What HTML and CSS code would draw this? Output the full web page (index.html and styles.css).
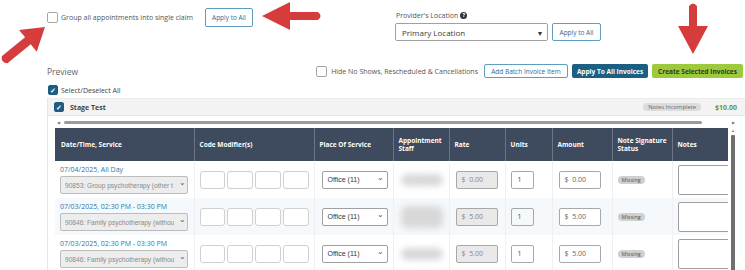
FILE: index.html
```html
<!DOCTYPE html>
<html lang="en">
<head>
    <meta charset="UTF-8">
    <meta name="viewport" content="width=device-width, initial-scale=1.0">
    <title>Batch Invoices</title>
    <link rel="stylesheet" href="styles.css">
</head>
<body>
<div class="page">
    <!-- Claim / location options -->
    <div class="top-row">
        <div class="claim-group">
            <label class="check-label"><span class="box"></span>Group all appointments into single claim</label>
        </div>
        <button class="btn-outline btn-tall">Apply to All</button>
        <div class="location">
            <div class="location-label">Provider's Location <span class="help">?</span></div>
            <div class="location-controls">
                <div class="select select-location"><span class="select-text">Primary Location</span><span class="caret">&#9662;</span></div>
                <button class="btn-outline btn-loc">Apply to All</button>
            </div>
        </div>
    </div>

    <!-- Preview toolbar -->
    <div class="preview-head">
        <span class="preview-title">Preview</span>
        <label class="check-label hide-label"><span class="box"></span>Hide No Shows, Rescheduled &amp; Cancellations</label>
        <button class="btn-outline btn-small">Add Batch Invoice Item</button>
        <button class="btn-dark">Apply To All Invoices</button>
        <button class="btn-green">Create Selected Invoices</button>
    </div>

    <label class="check-label select-all"><span class="box checked">&#10003;</span>Select/Deselect All</label>

    <div class="group">
        <div class="group-bar">
            <span class="box checked">&#10003;</span>
            <span class="group-name">Stage Test</span>
            <span class="badge-notes">Notes Incomplete</span>
            <span class="group-total">$10.00</span>
        </div>

        <div class="hscroll">
            <span class="arrow-l">&#9664;</span>
            <div class="hscroll-thumb"></div>
            <span class="arrow-r">&#9654;</span>
        </div>

        <div class="table-wrap">
            <div class="table-clip">
                <table class="invoice-table">
                    <colgroup>
                        <col style="width:139px"><col style="width:120px"><col style="width:79px">
                        <col style="width:56px"><col style="width:56px"><col style="width:47px">
                        <col style="width:60px"><col style="width:60px"><col style="width:80px">
                    </colgroup>
                    <thead>
                        <tr>
                            <th>Date/Time, Service</th>
                            <th>Code Modifier(s)</th>
                            <th>Place Of Service</th>
                            <th>Appointment Staff</th>
                            <th>Rate</th>
                            <th>Units</th>
                            <th>Amount</th>
                            <th>Note Signature Status</th>
                            <th>Notes</th>
                        </tr>
                    </thead>
                    <tbody>
                        <tr>
                            <td class="cell-date">
                                <div class="date-link">07/04/2025, All Day</div>
                                <div class="select select-service"><span class="select-text">90853: Group psychotherapy (other t</span><span class="chev">&#8964;</span></div>
                            </td>
                            <td><div class="mods"><span></span><span></span><span></span><span></span></div></td>
                            <td><div class="select select-place"><span class="select-text">Office (11)</span><span class="chev">&#8964;</span></div></td>
                            <td><div class="staff-blur"></div></td>
                            <td><div class="money readonly">$&nbsp; 0.00</div></td>
                            <td><div class="units">1</div></td>
                            <td><div class="money">$&nbsp; 0.00</div></td>
                            <td><span class="badge-missing">Missing</span></td>
                            <td><div class="notes-box"></div></td>
                        </tr>
                        <tr class="alt">
                            <td class="cell-date">
                                <div class="date-link">07/03/2025, 02:30 PM - 03:30 PM</div>
                                <div class="select select-service"><span class="select-text">90846: Family psychotherapy (withou</span><span class="chev">&#8964;</span></div>
                            </td>
                            <td><div class="mods"><span></span><span></span><span></span><span></span></div></td>
                            <td><div class="select select-place"><span class="select-text">Office (11)</span><span class="chev">&#8964;</span></div></td>
                            <td><div class="staff-blur tall"></div></td>
                            <td><div class="money readonly">$&nbsp; 5.00</div></td>
                            <td><div class="units">1</div></td>
                            <td><div class="money">$&nbsp; 5.00</div></td>
                            <td><span class="badge-missing">Missing</span></td>
                            <td><div class="notes-box"></div></td>
                        </tr>
                        <tr>
                            <td class="cell-date">
                                <div class="date-link">07/03/2025, 02:30 PM - 03:30 PM</div>
                                <div class="select select-service"><span class="select-text">90846: Family psychotherapy (withou</span><span class="chev">&#8964;</span></div>
                            </td>
                            <td><div class="mods"><span></span><span></span><span></span><span></span></div></td>
                            <td><div class="select select-place"><span class="select-text">Office (11)</span><span class="chev">&#8964;</span></div></td>
                            <td><div class="staff-blur"></div></td>
                            <td><div class="money readonly">$&nbsp; 5.00</div></td>
                            <td><div class="units">1</div></td>
                            <td><div class="money">$&nbsp; 5.00</div></td>
                            <td><span class="badge-missing">Missing</span></td>
                            <td><div class="notes-box"></div></td>
                        </tr>
                    </tbody>
                </table>
            </div>
            <div class="vscroll">
                <span class="arrow-u">&#9650;</span>
                <div class="vscroll-thumb"></div>
            </div>
        </div>
    </div>

    <!-- Red annotation arrows -->
    <svg class="annotations" width="745" height="270" viewBox="0 0 745 270">
        <g fill="#d63c3c">
            <path d="M262 16 L290 2 L290 12 L318 12 Q323 16 318 20 L290 20 L290 30 Z"/>
            <path d="M693 54 L678 26 L689 26 L689 6 Q693 1 697 6 L697 26 L708 26 Z"/>
            <g transform="translate(45 27) rotate(141)">
                <path d="M0 0 L22 -14 L22 -4.5 L52 -4.5 Q57 0 52 4.5 L22 4.5 L22 14 Z"/>
            </g>
        </g>
    </svg>
</div>
</body>
</html>
```

FILE: styles.css
```css
/* Base */
body {
    margin: 0;
    background: #fff;
    font-family: "Open Sans", Arial, sans-serif;
    font-size: 7px;
    color: #555;
}

.page {
    position: relative;
    width: 745px;
    height: 270px;
    overflow: hidden;
}

button {
    font-family: "Open Sans", Arial, sans-serif;
    cursor: pointer;
    padding: 0;
}

/* Checkbox look */
.check-label {
    display: flex;
    align-items: center;
    gap: 3px;
    white-space: nowrap;
}

.box {
    display: inline-flex;
    align-items: center;
    justify-content: center;
    width: 8px;
    height: 8px;
    border: 1px solid #a5a5a5;
    border-radius: 2px;
    background: #fff;
    flex-shrink: 0;
}

.box.checked {
    background: #1e5c82;
    border-color: #1e5c82;
    color: #fff;
    font-size: 7px;
    font-weight: bold;
    line-height: 1;
}

/* Top row */
.top-row {
    display: flex;
    align-items: flex-start;
    padding: 8px 0 0 47px;
    height: 56px;
}

.claim-group {
    width: 158px;
    padding-top: 4px;
}

.claim-group .box {
    width: 9px;
    height: 9px;
}

.btn-outline {
    background: #fff;
    border: 1px solid #5e9dbf;
    border-radius: 2px;
    color: #2c6c96;
    font-size: 6.5px;
}

.btn-tall {
    width: 48px;
    height: 19px;
}

.location {
    margin-left: 142px;
}

.location-label {
    display: flex;
    align-items: center;
    gap: 2px;
    height: 14px;
    padding-left: 1px;
    color: #555;
}

.help {
    display: inline-flex;
    align-items: center;
    justify-content: center;
    width: 7px;
    height: 7px;
    border-radius: 50%;
    background: #333;
    color: #fff;
    font-size: 5.5px;
    font-weight: bold;
}

.location-controls {
    display: flex;
    gap: 4px;
    margin-top: 1px;
}

.select {
    display: flex;
    align-items: center;
    box-sizing: border-box;
    height: 18px;
    border: 1px solid #a0a0a0;
    border-radius: 2px;
    background: #fff;
    white-space: nowrap;
}

.select-text {
    flex: 1;
    min-width: 0;
}

.select-location {
    width: 153px;
    padding: 0 5px 0 6px;
    font-size: 8px;
    font-weight: 400;
    color: #3a3a3a;
}

.caret {
    font-size: 8px;
    color: #333;
}

.btn-loc {
    width: 49px;
    height: 18px;
}

/* Preview toolbar */
.preview-head {
    display: flex;
    align-items: center;
    height: 14px;
    padding: 0 2px 0 47px;
}

.preview-title {
    font-size: 8.5px;
    color: #666;
}

.hide-label {
    margin-left: auto;
    margin-right: 6px;
    gap: 4px;
}

.hide-label .box {
    width: 9px;
    height: 9px;
}

.btn-small {
    width: 84px;
    height: 14px;
}

.btn-dark {
    width: 76px;
    height: 14px;
    margin-left: 4px;
    border: none;
    border-radius: 2px;
    background: #1b5f83;
    color: #fff;
    font-size: 6.5px;
    font-weight: bold;
}

.btn-green {
    width: 91px;
    height: 14px;
    margin-left: 4px;
    border: none;
    border-radius: 2px;
    background: #9dca3c;
    color: #2f3a1a;
    font-size: 6.5px;
    font-weight: bold;
}

.select-all {
    margin: 7px 0 0 48px;
    height: 10px;
    color: #444;
}

/* Client group */
.group {
    margin: 3px 0 0 47px;
    border-left: 1px solid #e6e6e6;
}

.group-bar {
    display: flex;
    align-items: center;
    height: 16px;
    padding-left: 6px;
    background: #f3f3f3;
    border-top: 1px solid #ececec;
    border-bottom: 1px solid #e6e6e6;
}

.group-name {
    margin-left: 6px;
    font-weight: bold;
    color: #444;
}

.badge-notes {
    margin-left: auto;
    padding: 0 5px;
    height: 8px;
    line-height: 8px;
    border-radius: 5px;
    background: #dcdcdc;
    color: #666;
    font-size: 5.8px;
}

.group-total {
    width: 30px;
    margin-left: 14px;
    font-weight: bold;
    color: #6b9a22;
}

.hscroll {
    display: flex;
    align-items: center;
    height: 5px;
    margin: 4px 0 0 9px;
    font-size: 4px;
    color: #777;
}

.hscroll-thumb {
    width: 638px;
    height: 3px;
    margin-left: 4px;
    border-radius: 2px;
    background: #9b9b9b;
}

.arrow-r {
    margin-left: 30px;
}

/* Table */
.table-wrap {
    display: flex;
    margin: 3px 0 0 7px;
}

.table-clip {
    width: 673px;
    overflow: hidden;
}

.invoice-table {
    width: 697px;
    table-layout: fixed;
    border-collapse: collapse;
}

.invoice-table th {
    height: 33px;
    padding: 0 5px;
    background: #3e4a5d;
    border-left: 1px solid #6c7687;
    color: #fff;
    font-size: 6.5px;
    font-weight: bold;
    text-align: left;
    line-height: 8px;
}

.invoice-table th:first-child {
    border-left: none;
    padding-left: 6px;
}

.invoice-table td {
    height: 37px;
    padding: 0 5px;
    border-left: 1px solid #eef0f3;
    box-sizing: border-box;
    vertical-align: middle;
}

.invoice-table td:first-child {
    border-left: none;
}

.invoice-table tr.alt td {
    background: #f5f9fc;
}

.cell-date {
    padding-top: 2px;
}

.date-link {
    color: #2a78ad;
    font-size: 7px;
    height: 11px;
    line-height: 10px;
}

.select-service {
    width: 128px;
    padding: 0 1px 0 4px;
    background: #ededed;
    border-color: #bcbcbc;
    color: #8a8a8a;
    font-family: "Liberation Sans", Arial, sans-serif;
    font-size: 6.6px;
}

.chev {
    font-size: 8px;
    line-height: 8px;
    margin-top: -4px;
    color: #555;
}

.mods {
    display: flex;
    gap: 2px;
}

.mods span {
    width: 26px;
    height: 18px;
    box-sizing: border-box;
    border: 1px solid #d0d0d0;
    border-radius: 3px;
    background: #fff;
}

.select-place {
    width: 66px;
    margin-left: 2px;
    padding: 0 3px 0 5px;
    color: #333;
    font-family: "Liberation Sans", Arial, sans-serif;
    font-size: 7px;
}

.staff-blur {
    width: 42px;
    height: 12px;
    margin-left: 2px;
    border-radius: 6px;
    background: #d8d8d8;
    filter: blur(3px);
}

.staff-blur.tall {
    height: 22px;
}

.money {
    display: flex;
    align-items: center;
    box-sizing: border-box;
    width: 42px;
    height: 18px;
    margin-left: 1px;
    padding-left: 5px;
    border: 1px solid #a8a8a8;
    border-radius: 2px;
    background: #fff;
    color: #666;
    font-size: 7px;
}

.money.readonly {
    background: #e9e9e9;
    color: #888;
}

.units {
    display: flex;
    align-items: center;
    box-sizing: border-box;
    width: 23px;
    height: 18px;
    padding-left: 6px;
    border: 1px solid #a8a8a8;
    border-radius: 2px;
    color: #444;
    font-size: 7px;
}

.badge-missing {
    display: inline-block;
    padding: 0 4px;
    height: 8px;
    line-height: 8px;
    border-radius: 4px;
    background: #d0d0d0;
    color: #555;
    font-size: 5.5px;
}

.notes-box {
    width: 60px;
    height: 30px;
    box-sizing: border-box;
    border: 1px solid #9e9e9e;
    border-radius: 2px;
    background: #fff;
}

/* Vertical scrollbar beside the table */
.vscroll {
    display: flex;
    flex-direction: column;
    align-items: center;
    width: 6px;
    margin-left: 2px;
    font-size: 4px;
    color: #777;
}

.vscroll-thumb {
    width: 4px;
    height: 140px;
    margin-top: 2px;
    background: #6f6f6f;
    border-radius: 1px;
}

.annotations {
    position: absolute;
    left: 0;
    top: 0;
    pointer-events: none;
}
```
